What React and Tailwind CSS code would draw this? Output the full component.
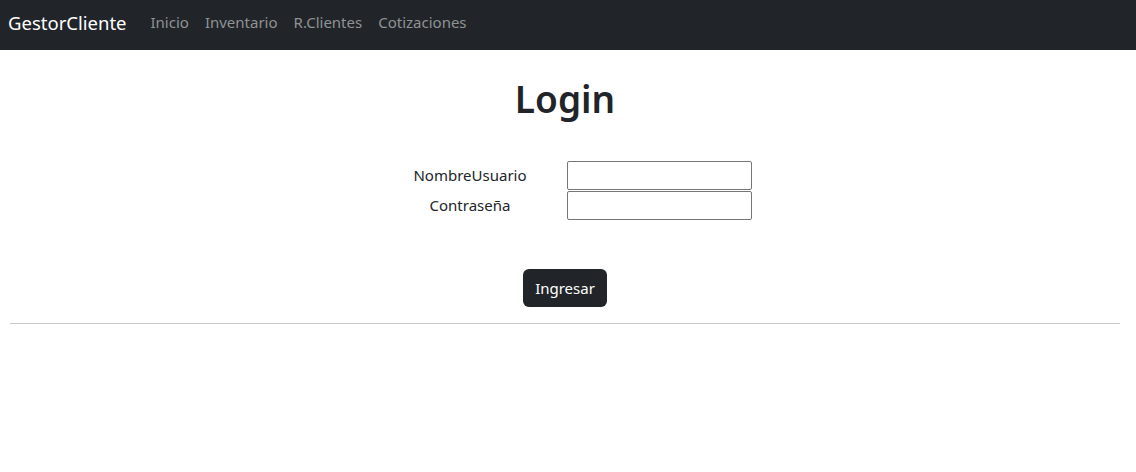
export default function App() {
  return (
    <div className="min-h-screen bg-white text-[#212529]" style={{ fontFamily: '"Noto Sans", "Open Sans", sans-serif' }}>
      {/* Navbar */}
      <nav className="h-[50px] bg-[#212529] flex items-center px-[8px] pb-[5px]">
        <span className="text-[18.5px] text-white mr-[16px]">GestorCliente</span>
        <ul className="flex items-center">
          <li className="px-[8px] text-[15px] text-[#909294]">Inicio</li>
          <li className="px-[8px] text-[15px] text-[#909294]">Inventario</li>
          <li className="px-[8px] text-[15px] text-[#909294]">R.Clientes</li>
          <li className="px-[8px] text-[15px] text-[#909294]">Cotizaciones</li>
        </ul>
      </nav>

      <main className="w-[1130px]">
        <h1 className="text-center text-[37px] font-semibold leading-[48px] pt-[25px]">Login</h1>

        <form className="flex flex-col items-center mt-[38px]">
          <div className="grid grid-cols-[184px_185px] gap-x-[5px] gap-y-[1px]">
            <label className="h-[29px] flex items-center justify-center text-[15px]">NombreUsuario</label>
            <input type="text" className="h-[29px] border border-[#767676] rounded-[2px]" />
            <label className="h-[29px] flex items-center justify-center text-[15px]">Contraseña</label>
            <input type="password" className="h-[29px] border border-[#767676] rounded-[2px]" />
          </div>

          <button
            type="button"
            className="mt-[49px] h-[38px] px-[12px] bg-[#212529] text-white text-[15px] rounded-[6px]"
          >
            Ingresar
          </button>
        </form>

        <hr className="mx-[10px] mt-[16px] border-t border-[#c8c9ca]" />
      </main>
    </div>
  );
}
